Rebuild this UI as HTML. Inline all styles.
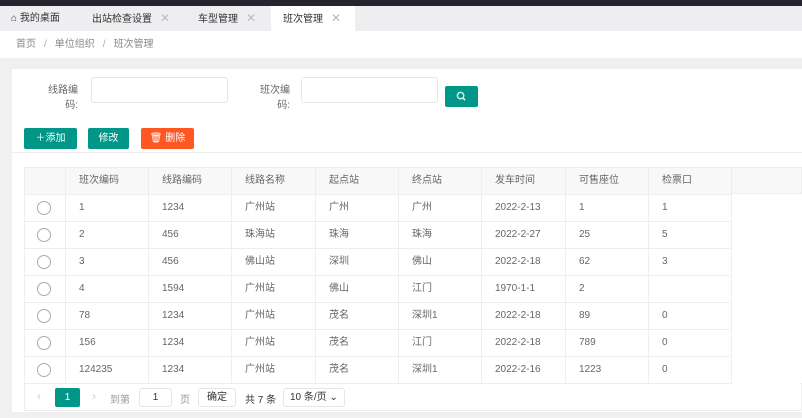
<!DOCTYPE html>
<html><head><meta charset="utf-8"><style>
*{margin:0;padding:0;box-sizing:border-box}
body{width:802px;height:418px;overflow:hidden;background:#f0f0f0;font-family:"Liberation Sans","Noto Sans CJK SC",sans-serif;font-size:10px;color:#666;position:relative}
.abs{position:absolute}
.top{left:0;top:0;width:802px;height:6px;background:#23262e}
.tabs{left:0;top:6px;width:802px;height:25px;background:#eeeef0}
.tab{position:absolute;top:0;height:25px;line-height:25px;color:#333;font-size:10px}
.x{color:#bbb;font-size:12px;margin-left:8px}
.bc{left:0;top:31px;width:802px;height:27px;background:#fff;line-height:27px;padding-left:16px;color:#888}
.bc span{margin:0 8px;color:#aaa}
.card{left:12px;top:69px;width:800px;height:343px;background:#fff}
.lbl{color:#666;text-align:right;line-height:15px}
.inp{border:1px solid #e6e6e6;border-radius:3px;height:26px;background:#fff}
.btn{color:#fff;height:21px;line-height:21px;text-align:center;border-radius:2px;font-size:10px}
table{border-collapse:collapse;position:absolute;left:24px;top:167px;table-layout:fixed;width:707px}
td{height:27px;border:1px solid #eee;padding:0 0 0 13px;color:#666;font-size:10px;line-height:12px;vertical-align:middle;overflow:hidden;white-space:nowrap}
tr{height:27px}
tr.h td{background:#f8f8f8}
.rad{width:14px;height:14px;border:1px solid #aaa;border-radius:50%;display:inline-block;vertical-align:middle}
</style></head><body>
<div class="abs top"></div>
<div class="abs tabs">
<div class="tab" style="left:11px">⌂ 我的桌面</div>
<div class="tab" style="left:92px">出站检查设置<span class="x">✕</span></div>
<div class="tab" style="left:198px">车型管理<span class="x">✕</span></div>
<div class="tab" style="left:271px;width:84px;background:#fff;padding-left:12px">班次管理<span class="x">✕</span></div>
</div>
<div class="abs bc">首页<span>/</span>单位组织<span>/</span>班次管理</div>
<div class="abs card"></div>
<div class="abs lbl" style="left:40px;top:83px;width:38px">线路编<br>码:</div>
<div class="abs inp" style="left:91px;top:77px;width:137px"></div>
<div class="abs lbl" style="left:250px;top:83px;width:40px">班次编<br>码:</div>
<div class="abs inp" style="left:301px;top:77px;width:137px"></div>
<div class="abs btn" style="left:445px;top:86px;width:33px;background:#009688"><svg width="11" height="11" viewBox="0 0 12 12" style="margin-top:5px"><circle cx="5" cy="5" r="3.5" stroke="#cfeee9" stroke-width="1.6" fill="none"/><path d="M7.5 7.5L10 10" stroke="#cfeee9" stroke-width="1.8"/></svg></div>
<div class="abs btn" style="left:24px;top:128px;width:53px;background:#009688">＋添加</div>
<div class="abs btn" style="left:88px;top:128px;width:41px;background:#009688">修改</div>
<div class="abs btn" style="left:141px;top:128px;width:53px;background:#ff5722">🗑 删除</div>
<div class="abs" style="left:12px;top:152px;width:790px;height:1px;background:#eee"></div>
<div class="abs" style="left:24px;top:167px;width:778px;height:27px;background:#f8f8f8;border:1px solid #eee"></div>
<table>
<colgroup><col style="width:41px"><col style="width:83px"><col style="width:83px"><col style="width:84px"><col style="width:83px"><col style="width:83px"><col style="width:84px"><col style="width:83px"><col style="width:83px"></colgroup>
<tr class="h"><td></td><td>班次编码</td><td>线路编码</td><td>线路名称</td><td>起点站</td><td>终点站</td><td>发车时间</td><td>可售座位</td><td>检票口</td></tr>
<tr><td style="padding-left:12px"><i class="rad"></i></td><td>1</td><td>1234</td><td>广州站</td><td>广州</td><td>广州</td><td>2022-2-13</td><td>1</td><td>1</td></tr>
<tr><td style="padding-left:12px"><i class="rad"></i></td><td>2</td><td>456</td><td>珠海站</td><td>珠海</td><td>珠海</td><td>2022-2-27</td><td>25</td><td>5</td></tr>
<tr><td style="padding-left:12px"><i class="rad"></i></td><td>3</td><td>456</td><td>佛山站</td><td>深圳</td><td>佛山</td><td>2022-2-18</td><td>62</td><td>3</td></tr>
<tr><td style="padding-left:12px"><i class="rad"></i></td><td>4</td><td>1594</td><td>广州站</td><td>佛山</td><td>江门</td><td>1970-1-1</td><td>2</td><td></td></tr>
<tr><td style="padding-left:12px"><i class="rad"></i></td><td>78</td><td>1234</td><td>广州站</td><td>茂名</td><td>深圳1</td><td>2022-2-18</td><td>89</td><td>0</td></tr>
<tr><td style="padding-left:12px"><i class="rad"></i></td><td>156</td><td>1234</td><td>广州站</td><td>茂名</td><td>江门</td><td>2022-2-18</td><td>789</td><td>0</td></tr>
<tr><td style="padding-left:12px"><i class="rad"></i></td><td>124235</td><td>1234</td><td>广州站</td><td>茂名</td><td>深圳1</td><td>2022-2-16</td><td>1223</td><td>0</td></tr>
</table>
<div class="abs" style="left:24px;top:383px;width:778px;height:28px;border:1px solid #eee;border-top:none"></div>
<div class="abs" style="left:37px;top:389px;color:#ccc;font-size:12px">‹</div>
<div class="abs btn" style="left:55px;top:388px;width:25px;height:19px;line-height:19px;background:#009688">1</div>
<div class="abs" style="left:92px;top:389px;color:#ccc;font-size:12px">›</div>
<div class="abs" style="left:110px;top:391px;color:#999">到第</div>
<div class="abs inp" style="left:139px;top:388px;width:33px;height:19px;line-height:17px;text-align:center;color:#333">1</div>
<div class="abs" style="left:180px;top:391px;color:#999">页</div>
<div class="abs inp" style="left:198px;top:388px;width:38px;height:19px;line-height:17px;text-align:center;color:#333">确定</div>
<div class="abs" style="left:245px;top:391px;color:#333">共 7 条</div>
<div class="abs inp" style="left:283px;top:388px;width:62px;height:19px;line-height:17px;padding-left:6px;color:#333">10 条/页 ⌄</div>
</body></html>
